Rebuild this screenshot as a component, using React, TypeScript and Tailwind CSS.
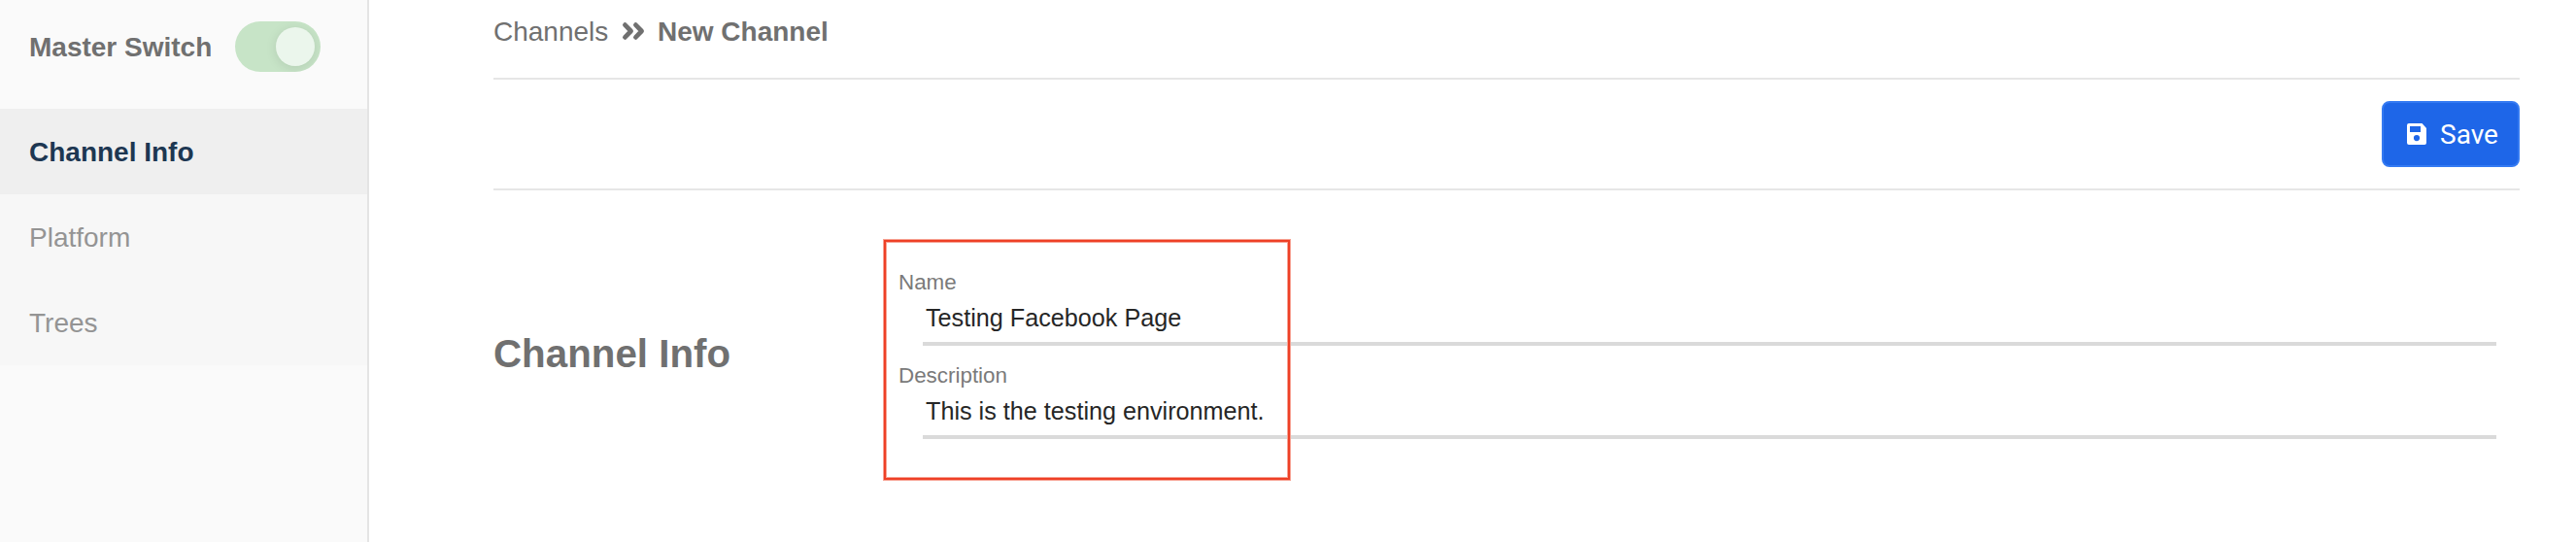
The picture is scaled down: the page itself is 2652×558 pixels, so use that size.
import React from "react";

function NavItem({ label, active = false }: { label: string; active?: boolean }) {
  return (
    <a
      className={
        active
          ? "flex h-[88px] items-center bg-[#efefef] pl-[30px] pt-[2px] font-bold text-[#1d3752]"
          : "flex h-[88px] items-center bg-[#f7f7f7] pl-[30px] pt-[2px] text-[#949494]"
      }
    >
      {label}
    </a>
  );
}

function Field({ label, value }: { label: string; value: string }) {
  return (
    <div className="h-24">
      <div className="h-8 pt-px text-[22.4px] leading-8 text-[#7a7a7a]">{label}</div>
      <div className="ml-[25px] mr-6 h-[50px] border-b-4 border-[#dadada] pl-[3px] text-[25.2px] leading-[42px] text-[#262626]">
        {value}
      </div>
    </div>
  );
}

export default function App() {
  return (
    <div className="flex h-[558px] w-[2652px] overflow-hidden bg-white font-['Liberation_Sans',Arial,sans-serif] text-[28px] leading-8">
      <aside className="w-[380px] shrink-0 border-r-2 border-[#e4e4e4] bg-[#fafafa]">
        <div className="flex h-28 pl-[30px] pt-[22px]">
          <span className="mt-[11px] w-[212px] whitespace-nowrap font-bold text-[#707070]">
            Master Switch
          </span>
          <span className="flex h-[52px] w-[88px] justify-end overflow-hidden rounded-full bg-[#c7e4c7] p-[6px]">
            <span className="size-10 rounded-full bg-[#ebf6ec] shadow-[0_2px_12px_rgba(0,0,0,0.1)]" />
          </span>
        </div>
        <nav>
          <NavItem label="Channel Info" active />
          <NavItem label="Platform" />
          <NavItem label="Trees" />
        </nav>
      </aside>
      <main className="ml-32 w-[2086px]">
        <header className="flex h-[82px] border-b-2 border-[#e6e6e6] pt-[17px] text-[#707070]">
          <span className="w-[132px]">Channels</span>
          <svg
            viewBox="0 0 24 20"
            className="mt-[5px] h-5 w-6"
            fill="none"
            stroke="currentColor"
            strokeWidth="4.7"
            strokeLinecap="round"
            strokeLinejoin="round"
          >
            <path d="M3.4 3.6L9.6 10L3.4 16.4M14.4 3.6L20.6 10L14.4 16.4" />
          </svg>
          <b className="ml-[13px]">New Channel</b>
        </header>
        <div className="flex h-[114px] items-center justify-end border-b-2 border-[#e6e6e6]">
          <button className="flex h-[68px] w-[142px] items-center rounded-lg border-2 border-[#347af2] bg-[#1e66e8] pl-[24px] font-[Roboto,sans-serif] text-white">
            <svg viewBox="0 0 20 22" className="h-[22px] w-5" fill="currentColor">
              <path
                fillRule="evenodd"
                d="M2 0H15.5L20 5V20a2 2 0 0 1-2 2H2a2 2 0 0 1-2-2V2a2 2 0 0 1 2-2ZM3 3V9H14V3ZM10 12a3.1 3.1 0 1 0 0 6.2a3.1 3.1 0 1 0 0-6.2Z"
              />
            </svg>
            <span className="ml-[14px] pt-[2px]">Save</span>
          </button>
        </div>
        <section className="flex h-[362px]">
          <h1 className="w-[401px] pt-[144px] text-[40.32px] font-bold leading-[48px] text-[#707070]">
            Channel Info
          </h1>
          <div className="relative flex-1 pl-[16px] pt-[78px]">
            <Field label="Name" value="Testing Facebook Page" />
            <Field label="Description" value="This is the testing environment." />
            <div className="absolute left-px top-[51px] h-[247px] w-[418px] border-2 border-[#ee4026] shadow-[0_0_0_1px_#f7a293,inset_0_0_0_1px_#f7a293]" />
          </div>
        </section>
      </main>
    </div>
  );
}
